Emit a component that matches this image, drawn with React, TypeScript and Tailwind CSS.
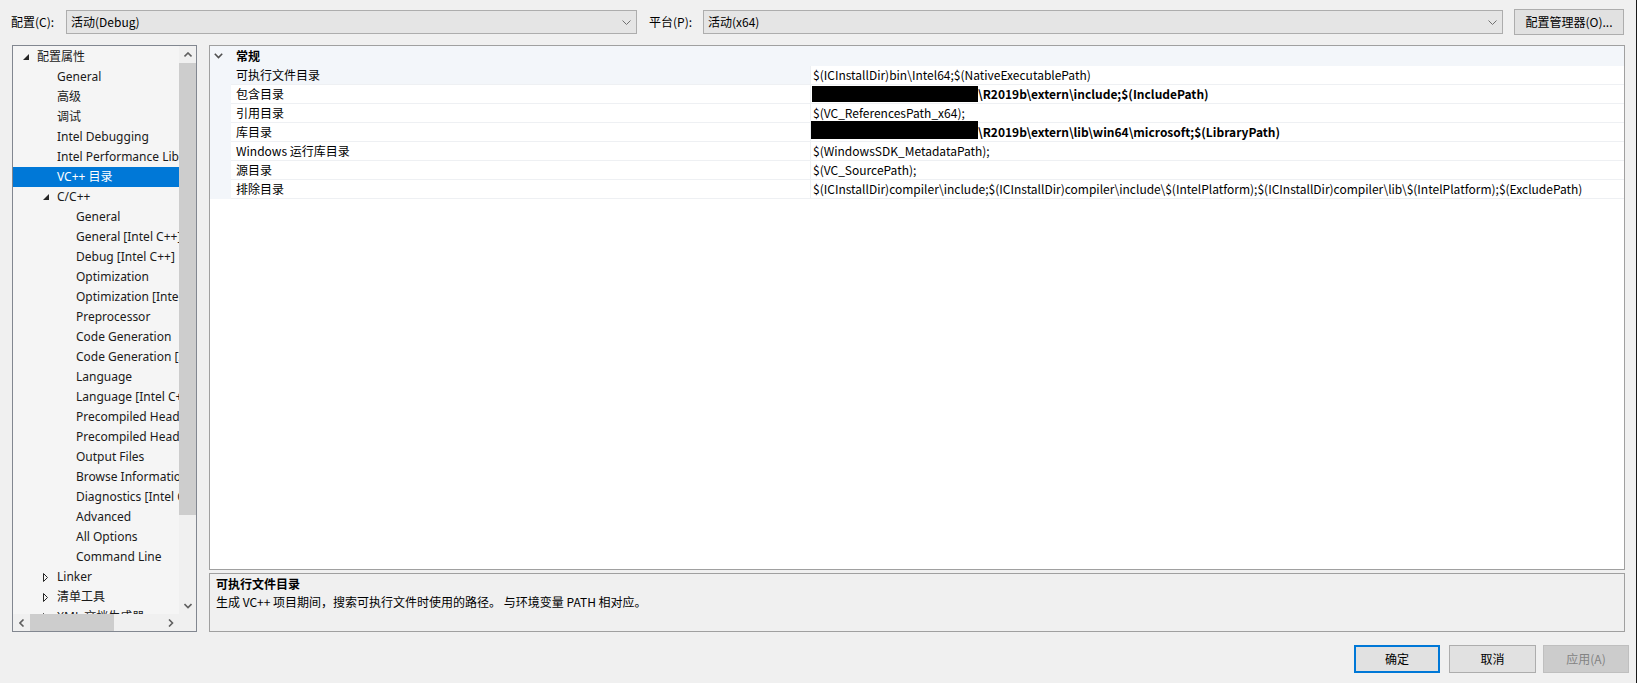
import type { ReactNode } from "react"

type TreeItem = { label: string; level: 0 | 1 | 2; exp?: "open" | "closed"; selected?: boolean }

const treeItems: TreeItem[] = [
    { label: "配置属性", level: 0, exp: "open" },
    { label: "General", level: 1 },
    { label: "高级", level: 1 },
    { label: "调试", level: 1 },
    { label: "Intel Debugging", level: 1 },
    { label: "Intel Performance Libraries", level: 1 },
    { label: "VC++ 目录", level: 1, selected: true },
    { label: "C/C++", level: 1, exp: "open" },
    { label: "General", level: 2 },
    { label: "General [Intel C++]", level: 2 },
    { label: "Debug [Intel C++]", level: 2 },
    { label: "Optimization", level: 2 },
    { label: "Optimization [Intel C++]", level: 2 },
    { label: "Preprocessor", level: 2 },
    { label: "Code Generation", level: 2 },
    { label: "Code Generation [Intel C++]", level: 2 },
    { label: "Language", level: 2 },
    { label: "Language [Intel C++]", level: 2 },
    { label: "Precompiled Headers", level: 2 },
    { label: "Precompiled Headers [Intel C++]", level: 2 },
    { label: "Output Files", level: 2 },
    { label: "Browse Information", level: 2 },
    { label: "Diagnostics [Intel C++]", level: 2 },
    { label: "Advanced", level: 2 },
    { label: "All Options", level: 2 },
    { label: "Command Line", level: 2 },
    { label: "Linker", level: 1, exp: "closed" },
    { label: "清单工具", level: 1, exp: "closed" },
    { label: "XML 文档生成器", level: 1, exp: "closed" },
]

type Prop = { name: string; value: ReactNode; highlight?: boolean }

const props: Prop[] = [
    { name: "可执行文件目录", value: "$(ICInstallDir)bin\\Intel64;$(NativeExecutablePath)", highlight: true },
    {
        name: "包含目录",
        value: (
            <>
                <span className="inline-block w-[166px] h-[16px] bg-black -ml-[1px]" />
                <span className="font-bold">\R2019b\extern\include;$(IncludePath)</span>
            </>
        ),
    },
    { name: "引用目录", value: "$(VC_ReferencesPath_x64);" },
    {
        name: "库目录",
        value: (
            <>
                <span className="relative -top-[2px] inline-block w-[167px] h-[18px] bg-black -ml-[2px]" />
                <span className="font-bold">\R2019b\extern\lib\win64\microsoft;$(LibraryPath)</span>
            </>
        ),
    },
    { name: "Windows 运行库目录", value: "$(WindowsSDK_MetadataPath);" },
    { name: "源目录", value: "$(VC_SourcePath);" },
    {
        name: "排除目录",
        value: "$(ICInstallDir)compiler\\include;$(ICInstallDir)compiler\\include\\$(IntelPlatform);$(ICInstallDir)compiler\\lib\\$(IntelPlatform);$(ExcludePath)",
    },
]

function ComboChevron() {
    return (
        <svg width="9" height="5" viewBox="0 0 9 5" className="shrink-0">
            <polyline points="0.5,0.5 4.5,4.5 8.5,0.5" fill="none" stroke="#707070" strokeWidth="1" />
        </svg>
    )
}

function Combo({ text, width }: { text: string; width: string }) {
    return (
        <div className={`${width} h-[24px] border border-[#adadad] bg-[#e5e5e5] flex items-center justify-between pl-[4px] pr-[5px]`}>
            <span>{text}</span>
            <ComboChevron />
        </div>
    )
}

function Arrow({ dir }: { dir: "up" | "down" | "left" | "right" }) {
    const pts = {
        up: "0.5,4.5 4,1 7.5,4.5",
        down: "0.5,1 4,4.5 7.5,1",
        left: "4.5,0.5 1,4 4.5,7.5",
        right: "1,0.5 4.5,4 1,7.5",
    }[dir]
    const vertical = dir === "up" || dir === "down"
    return (
        <svg width={vertical ? 8 : 6} height={vertical ? 6 : 8} viewBox={vertical ? "0 0 8 6" : "0 0 6 8"}>
            <polyline points={pts} fill="none" stroke="#606060" strokeWidth="1.6" />
        </svg>
    )
}

function Expander({ exp }: { exp?: "open" | "closed" }) {
    if (exp === "open")
        return (
            <svg width="6" height="6" viewBox="0 0 6 6">
                <polygon points="6,0 6,6 0,6" fill="#262626" />
            </svg>
        )
    if (exp === "closed")
        return (
            <svg width="6" height="9" viewBox="0 0 6 9">
                <polygon points="0.5,0.5 4.5,4.5 0.5,8.5" fill="none" stroke="#262626" strokeWidth="1" />
            </svg>
        )
    return null
}

function Tree() {
    const indent = ["pl-[8px]", "pl-[28px]", "pl-[47px]"]
    return (
        <div className="w-[185px] h-[587px] border border-[#828790] bg-[#f5f5f5] flex flex-col font-['Noto_Sans','Noto_Sans_CJK_SC',sans-serif]">
            <div className="flex h-[568px]">
                <div className="w-[166px] overflow-hidden pt-[1px]">
                    {treeItems.map((item, i) => (
                        <div
                            key={item.label + i}
                            className={`h-[20px] flex items-center whitespace-nowrap ${indent[item.level]} ${
                                item.selected ? "bg-[#0078d7] text-white" : "text-[#1a1a1a]"
                            }`}
                        >
                            <span className="w-[16px] shrink-0 flex items-center pl-[2px]">
                                <Expander exp={item.exp} />
                            </span>
                            <span>{item.label}</span>
                        </div>
                    ))}
                </div>
                <div className="w-[17px] bg-[#f0f0f0] flex flex-col">
                    <div className="h-[17px] flex items-center justify-center">
                        <Arrow dir="up" />
                    </div>
                    <div className="h-[452px] bg-[#cdcdcd]" />
                    <div className="flex-1" />
                    <div className="h-[17px] flex items-center justify-center">
                        <Arrow dir="down" />
                    </div>
                </div>
            </div>
            <div className="flex h-[17px]">
                <div className="w-[166px] bg-[#f0f0f0] flex items-center">
                    <div className="w-[17px] flex items-center justify-center">
                        <Arrow dir="left" />
                    </div>
                    <div className="w-[84px] h-[17px] bg-[#cdcdcd]" />
                    <div className="flex-1" />
                    <div className="w-[17px] flex items-center justify-center">
                        <Arrow dir="right" />
                    </div>
                </div>
                <div className="w-[17px] bg-[#f0f0f0]" />
            </div>
        </div>
    )
}

function PropertyGrid() {
    return (
        <div className="h-[525px] border border-[#a0a0a0] bg-white">
            <div className="h-[20px] bg-[#f3f6fa] flex items-center pl-[4px]">
                <svg width="9" height="6" viewBox="0 0 9 6">
                    <polyline points="0.8,0.8 4.5,4.6 8.2,0.8" fill="none" stroke="#505050" strokeWidth="1.6" />
                </svg>
                <span className="ml-[13px] font-bold">常规</span>
            </div>
            {props.map((p) => (
                <div key={p.name} className="h-[19px] flex">
                    <div className="w-[21px] bg-[#f3f6fa]" />
                    <div
                        className={`w-[580px] pl-[5px] flex items-center border-b border-r border-[#eef0f3] ${
                            p.highlight ? "bg-[#f3f6fa]" : ""
                        }`}
                    >
                        {p.name}
                    </div>
                    <div className="flex-1 pl-[2px] flex items-center whitespace-nowrap border-b border-[#eef0f3]">
                        {p.value}
                    </div>
                </div>
            ))}
        </div>
    )
}

export default function App() {
    return (
        <div className="w-[1637px] h-[683px] bg-[#f0f0f0] border-r border-[#1a1a1a] overflow-hidden flex flex-col text-[12px] text-black font-['Noto_Sans_CJK_SC',sans-serif]">
            <div className="h-[45px] pb-[1px] pl-[11px] flex items-center">
                <span className="w-[55px]">配置(C):</span>
                <Combo text="活动(Debug)" width="w-[571px]" />
                <span className="ml-[12px] w-[54px]">平台(P):</span>
                <Combo text="活动(x64)" width="w-[800px]" />
                <button className="ml-[11px] w-[110px] h-[26px] border border-[#adadad] bg-[#e1e1e1]">
                    配置管理器(O)...
                </button>
            </div>

            <div className="flex pl-[12px]">
                <Tree />
                <div className="ml-[12px] w-[1416px] flex flex-col">
                    <PropertyGrid />
                    <div className="mt-[3px] h-[59px] border border-[#a0a0a0] bg-[#f0f0f0] pl-[6px] pt-[1px] leading-[18px]">
                        <div className="font-bold">可执行文件目录</div>
                        <div>生成 VC++ 项目期间，搜索可执行文件时使用的路径。 与环境变量 PATH 相对应。</div>
                    </div>
                </div>
            </div>

            <div className="mt-[13px] flex justify-end pr-[7px]">
                <button className="w-[86px] h-[28px] border-2 border-[#0078d7] bg-[#e1e1e1]">确定</button>
                <button className="ml-[9px] w-[87px] h-[28px] border border-[#adadad] bg-[#e1e1e1]">取消</button>
                <button className="ml-[7px] w-[86px] h-[28px] border border-[#bfbfbf] bg-[#cccccc] text-[#838383]">
                    应用(A)
                </button>
            </div>
        </div>
    )
}
